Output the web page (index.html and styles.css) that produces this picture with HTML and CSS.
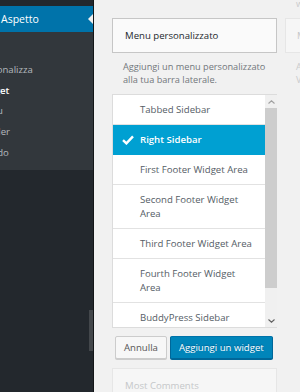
FILE: index.html
```html
<!DOCTYPE html>
<html>
	<head>
		<meta charset="UTF-8">
		<meta name="viewport" content="width=device-width, initial-scale=1">
		<title>Widget &lsaquo; Aspetto</title>
		<link rel="stylesheet" href="styles.css">
	</head>
	<body>
		<div class="admin">
			<nav class="sidebar">
				<div class="sidebar-inner">
					<div class="menu-top">Aspetto</div>
					<ul class="submenu">
						<li>Temi</li>
						<li>Personalizza</li>
						<li class="current">Widget</li>
						<li>Menu</li>
						<li>Header</li>
						<li>Sfondo</li>
					</ul>
				</div>
				<div class="sidebar-thumb"></div>
			</nav>
			<main class="widgets">
				<div class="col">
					<div class="widget-title">Menu personalizzato</div>
					<p class="widget-desc">Aggiungi un menu personalizzato alla tua barra laterale.</p>
					<div class="chooser">
						<ul class="sidebars">
							<li>Tabbed Sidebar</li>
							<li class="selected">
								<svg class="check" viewBox="0 0 12 10" width="12" height="10"><path d="M1 5.2 L4.4 8.4 L11 1.4" fill="none" stroke="#fff" stroke-width="2.4"/></svg>
								Right Sidebar
							</li>
							<li>First Footer Widget Area</li>
							<li>Second Footer Widget Area</li>
							<li>Third Footer Widget Area</li>
							<li>Fourth Footer Widget Area</li>
							<li>BuddyPress Sidebar</li>
						</ul>
						<div class="scrollbar">
							<span class="scroll-btn"><svg viewBox="0 0 7 4" width="7" height="4"><path d="M0.5 3.5 L3.5 0.8 L6.5 3.5" fill="none" stroke="#a0a0a0" stroke-width="1.1"/></svg></span>
							<span class="scroll-thumb"></span>
							<span class="scroll-track"></span>
							<span class="scroll-btn"><svg viewBox="0 0 7 4" width="7" height="4"><path d="M0.5 0.5 L3.5 3.2 L6.5 0.5" fill="none" stroke="#606060" stroke-width="1.1"/></svg></span>
						</div>
					</div>
					<div class="chooser-actions">
						<button type="button" class="button">Annulla</button>
						<button type="button" class="button button-primary">Aggiungi un widget</button>
					</div>
					<div class="widget-title faded">Most Comments</div>
				</div>
				<div class="col col-next">
					<p class="widget-desc top">wp</p>
					<div class="widget-title faded">Meta</div>
					<p class="widget-desc faded">Accesso, RSS e<br>Visualizza link</p>
				</div>
			</main>
		</div>
	</body>
</html>
```

FILE: styles.css
```css
*, *:before, *:after {
	box-sizing: border-box;
}
html {
	font-family: "Open Sans", "Noto Sans", sans-serif;
	font-size: 10px;
}
body {
	margin: 0;
	background: #f1f1f1;
	color: #23282d;
}
ul {
	list-style: none;
	margin: 0;
	padding: 0;
}
.admin {
	display: flex;
	height: 392px;
	overflow: hidden;
}

/* admin menu, scrolled off to the left */
.sidebar {
	position: relative;
	width: 94px;
	flex-shrink: 0;
	background: #23282d;
	border-right: 1px solid #131618;
	overflow: hidden;
}
.sidebar-inner {
	width: 128px;
	margin-left: -35px;
	padding-top: 6px;
}
.menu-top {
	position: relative;
	height: 26px;
	line-height: 26px;
	padding-left: 36px;
	background: #0073aa;
	color: #fff;
	font-size: 10.5px;
}
.menu-top:after {
	content: "";
	position: absolute;
	right: 0;
	top: 8px;
	border: 5px solid transparent;
	border-right-color: #f1f1f1;
}
.submenu {
	background: #32373c;
	padding: 7px 0 6.5px;
}
.submenu li {
	line-height: 20.75px;
	padding-left: 12px;
	color: #b4b9be;
	font-size: 9.6px;
}
.submenu li.current {
	color: #fff;
	font-weight: 600;
}
.sidebar-thumb {
	position: absolute;
	right: 0;
	top: 310px;
	width: 4px;
	height: 41px;
	background: #43474b;
}

/* widgets screen */
.widgets {
	flex: 1;
	display: flex;
	gap: 8px;
	padding-left: 18px;
	overflow: hidden;
}
.col {
	width: 165px;
	flex-shrink: 0;
	padding-top: 18px;
}
.widget-title {
	height: 35px;
	line-height: 33px;
	padding-left: 12px;
	background: #fafafa;
	border: 1px solid #c6c6c6;
	font-size: 9.6px;
}
.widget-title.faded {
	background: #f6f6f6;
	border-color: #e6e6e6;
	color: #c5c7c9;
}
.widget-desc {
	margin: 8px 0 0;
	padding-left: 11px;
	color: #72777c;
	font-size: 9.2px;
	line-height: 12.5px;
}
.widget-desc.faded {
	color: #c9cbcd;
}
.chooser {
	display: flex;
	height: 234px;
	margin-top: 8px;
	background: #fff;
	border: 1px solid #dcdcdc;
	border-right: 0;
}
.sidebars {
	flex: 1;
	overflow: hidden;
}
.sidebars li {
	position: relative;
	padding: 8px 8px 7px 27px;
	line-height: 14px;
	border-bottom: 1px solid #e2e2e2;
	color: #555d66;
	font-size: 9.6px;
}
.sidebars li.selected {
	background: #00a0d2;
	border-bottom-color: #00a0d2;
	color: #fff;
	font-weight: 600;
}
.check {
	position: absolute;
	left: 9px;
	top: 10px;
}
.scrollbar {
	display: flex;
	flex-direction: column;
	width: 12px;
	background: #f0f0f0;
}
.scroll-btn {
	display: flex;
	align-items: center;
	justify-content: center;
	height: 13px;
}
.scroll-thumb {
	height: 180px;
	background: #cdcdcd;
}
.scroll-track {
	flex: 1;
}
.chooser-actions {
	display: flex;
	gap: 3px;
	margin: 8px 0 0 3px;
}
.button {
	height: 23px;
	padding: 0 8px;
	font-family: inherit;
	font-size: 9.6px;
	border: 1px solid #ccc;
	border-radius: 2px;
	background: #f7f7f7;
	color: #555;
	box-shadow: 0 1px 0 #ccc;
}
.button-primary {
	padding: 0 8px;
	background: #0085ba;
	border-color: #0073aa #006799 #006799;
	color: #fff;
	box-shadow: 0 1px 0 #006799;
	text-shadow: 0 -1px 1px #006799;
}
.chooser-actions + .widget-title {
	margin-top: 9px;
}
.col-next {
	padding-top: 0;
}
.widget-desc.top {
	margin: -2px 0 8px;
	color: #c9cbcd;
	height: 12px;
}
.col-next .widget-title {
	padding-left: 11px;
}
```
